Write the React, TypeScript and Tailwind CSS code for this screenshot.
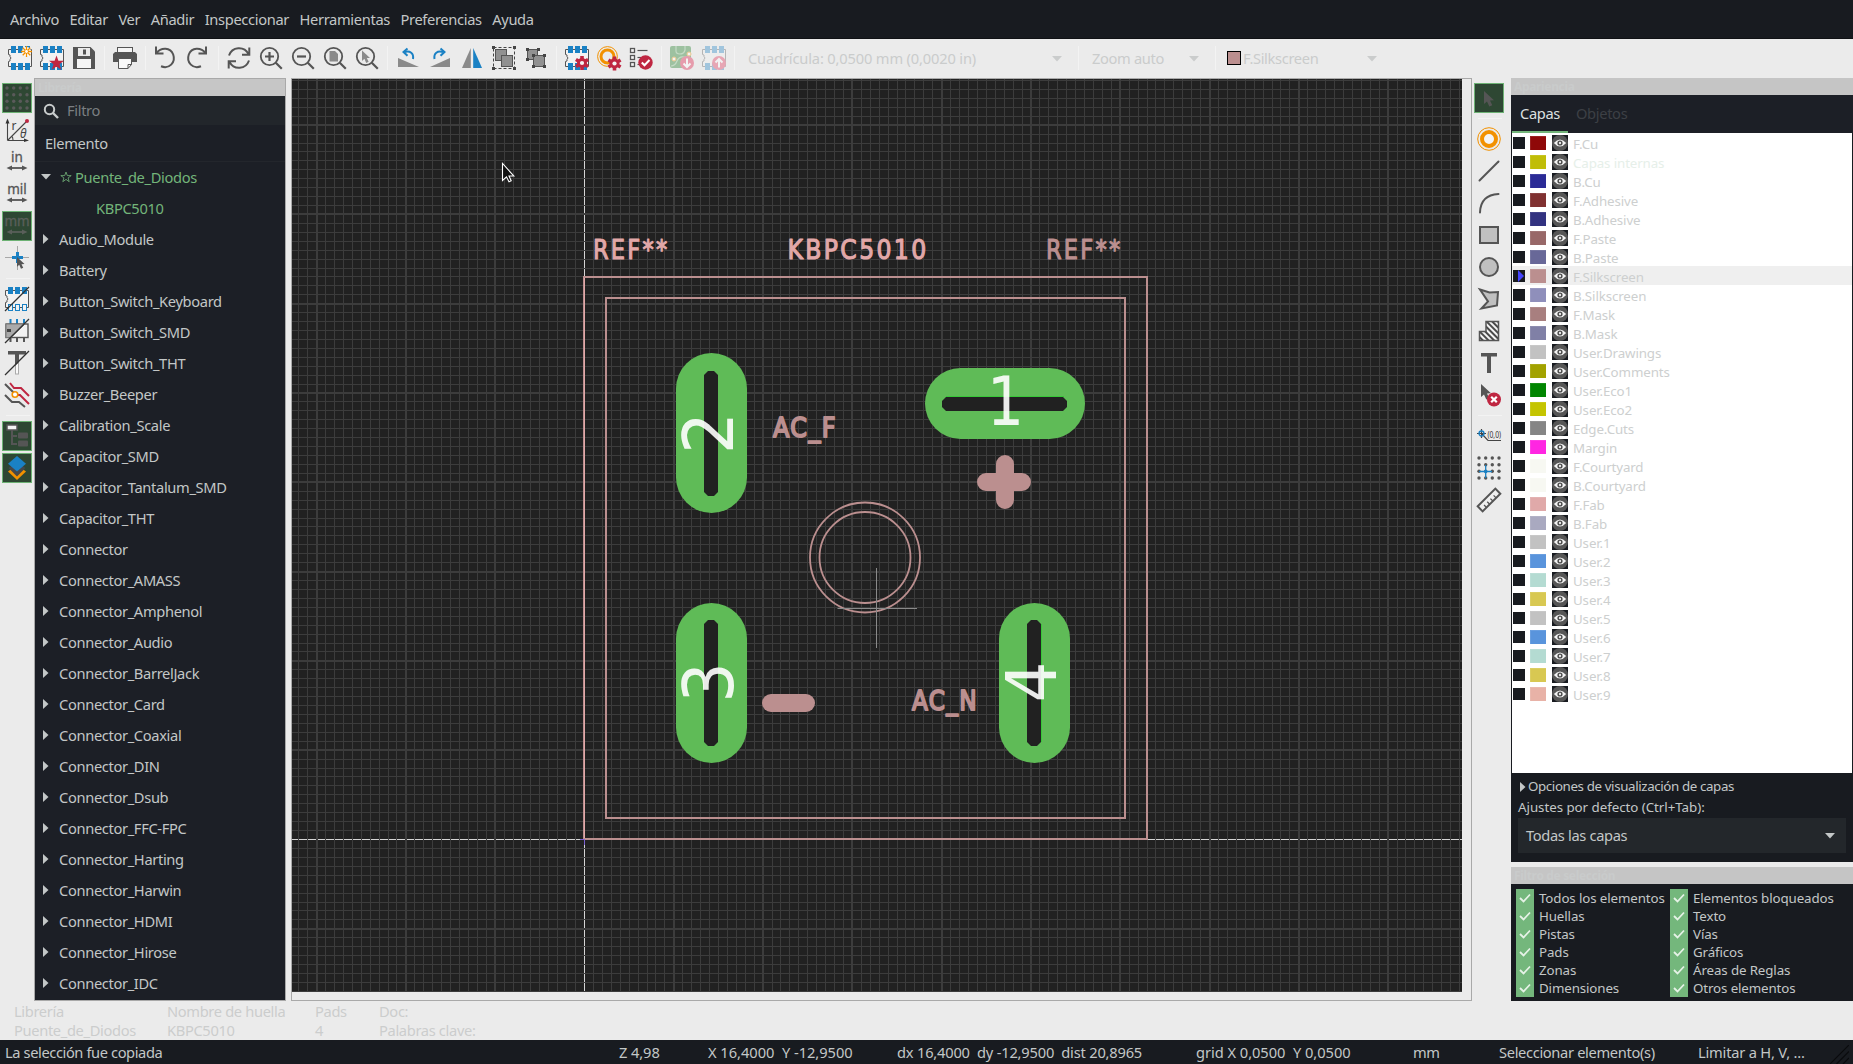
import React from "react";

const DARK = "#555555";
const BLUE = "#1a81c4";
const RED = "#bf2641";
const ORANGE = "#f29100";

function Ic({ children, className = "" }: { children: React.ReactNode; className?: string }) {
  return (
    <svg width="24" height="24" viewBox="0 0 24 24" fill="none" className={`block shrink-0 overflow-visible ${className}`}>
      {children}
    </svg>
  );
}

/* ---------- shared icon parts ---------- */
function Footprint({ hollow = false }: { hollow?: boolean }) {
  return (
    <>
      <path d="M.5 3.5H23.5V20.5H.5V15.5L2 15V13.5L3 12L2 10.5V9L.5 8.500Z" fill="#f2f2f2" stroke="#545454" />
      {[3, 10, 17].map((x) => (
        <g key={x}>
          <rect x={x} y="0" width="5" height="7" fill={BLUE} />
          {hollow ? (
            <rect x={x + 0.5} y="17.500" width="4" height="6" fill="#f2f2f2" stroke={BLUE} />
          ) : (
            <rect x={x} y="17" width="5" height="7" fill={BLUE} />
          )}
        </g>
      ))}
    </>
  );
}

function Gear({ cx, cy }: { cx: number; cy: number }) {
  return (
    <g transform={`translate(${cx} ${cy})`}>
      {[0, 60, 120].map((a) => (
        <rect key={a} x="-1.800" y="-7" width="3.600" height="14" fill={RED} transform={`rotate(${a})`} />
      ))}
      <circle r="5" fill={RED} />
      <circle r="2.100" fill="#f4f4f4" />
    </g>
  );
}

function Magnifier({ children }: { children?: React.ReactNode }) {
  return (
    <Ic>
      <circle cx="10.500" cy="10.500" r="8.700" stroke={DARK} strokeWidth="1.800" />
      <path d="M16.800 16.800L22.800 22.800" stroke={DARK} strokeWidth="2.200" />
      {children}
    </Ic>
  );
}

const Arrow = ({ x = 0, y = 0, fill = DARK }: { x?: number; y?: number; fill?: string }) => (
  <path
    transform={`translate(${x} ${y})`}
    d="M0 0V13L3 10.400L5.300 15.500L8.300 14.200L6 9.500L10 9.300Z"
    fill={fill}
  />
);

/* ---------- top toolbar ---------- */
const NewFp = () => (
  <Ic>
    <Footprint />
    <circle cx="18.500" cy="5.500" r="4.500" fill="#fff" />
    <path d="M18.500 0V11M13 5.500H24M14.700 1.700L22.300 9.300M22.300 1.700L14.700 9.300" stroke={ORANGE} strokeWidth="1.300" />
    <circle cx="18.500" cy="5.500" r="1.400" fill="#fff" />
  </Ic>
);
const StarFp = () => (
  <Ic>
    <Footprint />
    <path d="M16.500 9.500L18.400 14.800H24L19.500 18.200L21.200 23.800L16.500 20.400L11.800 23.800L13.500 18.200L9 14.800H14.600Z" fill={RED} />
  </Ic>
);
const Save = () => (
  <Ic>
    <path d="M1 1H18.500L23 5.500V23H1Z" fill={DARK} />
    <rect x="6" y="2" width="12" height="8" fill="#ebebeb" />
    <rect x="11" y="3.500" width="3" height="5" fill={DARK} />
    <rect x="5" y="13" width="14" height="9" fill="#f5f5f5" />
  </Ic>
);
const Print = () => (
  <Ic>
    <rect x="4.500" y="1.500" width="15" height="6" fill="#f5f5f5" stroke={DARK} />
    <path d="M2 6H22L24 8V16H0V8Z" fill={DARK} />
    <path d="M5.500 12.500H18.500V18.500L15 22.500H5.500Z" fill="#f8f8f8" stroke={DARK} />
    <path d="M18.500 18.500H15V22.500" stroke={DARK} />
  </Ic>
);
const Undo = () => (
  <Ic>
    <path d="M3 .5V7.500H10.500M3.300 7.300C8 1 17.500 1.200 20.200 8.500C23 16.500 16 23.500 8 20.300" stroke={DARK} strokeWidth="2" />
  </Ic>
);
const Redo = () => (
  <Ic>
    <path d="M21 .5V7.500H13.500M20.700 7.300C16 1 6.500 1.200 3.800 8.500C1 16.500 8 23.500 16 20.300" stroke={DARK} strokeWidth="2" />
  </Ic>
);
const Refresh = () => (
  <Ic>
    <path d="M2 9.500C5 .5 17 -.5 21.500 8M22.300 1.500V8.700H15M22 14.500C19 23.500 7 24.500 2.500 16M1.700 22.500V15.300H9" stroke={DARK} strokeWidth="2" />
  </Ic>
);
const RotL = () => (
  <Ic>
    <path d="M2 12V21H23Z" fill="#8a8a8a" />
    <path d="M17 13C18 7 14 4.500 8.500 6" stroke={BLUE} strokeWidth="2" />
    <path d="M11.500 2.500L7.500 6L11.500 9.800" stroke={BLUE} strokeWidth="2" />
  </Ic>
);
const RotR = () => (
  <Ic>
    <path d="M22 12V21H2Z" fill="#8a8a8a" />
    <path d="M6.500 13C5.500 7 9.500 4.500 15 6" stroke={BLUE} strokeWidth="2" />
    <path d="M12.500 2.500L16.500 6L12.500 9.800" stroke={BLUE} strokeWidth="2" />
  </Ic>
);
const Mirror = () => (
  <Ic>
    <path d="M10.800 2V22H2Z" fill="#8a8a8a" />
    <path d="M13.200 2V22H22Z" fill={BLUE} />
  </Ic>
);
const Group = () => (
  <Ic>
    <rect x="3.500" y="3.500" width="11" height="11" fill="#919191" stroke={DARK} />
    <rect x="9.500" y="9.500" width="11" height="11" fill="#919191" stroke={DARK} />
    <rect x="1.500" y="1.500" width="21" height="21" stroke="#444" strokeDasharray="3 2" />
    {[0, 21].map((x) => [0, 21].map((y) => <rect key={`${x}${y}`} x={x} y={y} width="3" height="3" fill="#444" />))}
  </Ic>
);
const Ungroup = () => (
  <Ic>
    <rect x="3.500" y="3.500" width="10" height="10" fill="#919191" stroke={DARK} />
    <rect x="9.500" y="9.500" width="11" height="11" fill="#919191" stroke={DARK} />
    {[[2, 2], [13, 2], [2, 12], [8, 8], [19, 8], [8, 19], [19, 19]].map(([x, y]) => (
      <rect key={`${x}-${y}`} x={x} y={y} width="3" height="3" fill="#444" />
    ))}
  </Ic>
);
const FpProps = () => (
  <Ic>
    <Footprint />
    <Gear cx={17} cy={17} />
  </Ic>
);
const PadProps = () => (
  <Ic>
    <circle cx="10.500" cy="10.500" r="9.900" stroke={ORANGE} />
    <circle cx="10.500" cy="10.500" r="6.500" stroke={ORANGE} strokeWidth="3" />
    <Gear cx={17.500} cy={17.500} />
  </Ic>
);
const Check = () => (
  <Ic>
    {[2.500, 9.500, 16.500].map((y) => (
      <g key={y} stroke={DARK}>
        <rect x="1.500" y={y} width="4" height="4" fill="#f4f4f4" strokeWidth="1.300" />
        <path d={`M8.500 ${y + 2}H18.500`} strokeWidth="1.200" />
      </g>
    ))}
    <circle cx="16.500" cy="16.500" r="7.200" fill={RED} />
    <path d="M12.800 16.500L15.500 19.300L20.500 14" stroke="#fff" strokeWidth="2" />
  </Ic>
);
const Board = () => (
  <Ic className="opacity-40">
    <rect width="21" height="22" rx="2" fill="#2b8533" />
    <path d="M6 0V5Q6 8 10 8T15 4V0M1 20Q5 20 7 15T14 11H20" stroke="#8fc28f" strokeWidth="1.200" />
    <circle cx="4" cy="13" r="2" fill="#fff" stroke={ORANGE} />
    <circle cx="19" cy="8" r="2" fill="#fff" stroke={ORANGE} />
    <circle cx="17" cy="17" r="7" fill="#e02850" />
    <path d="M17 12.500V20.500M13.500 17.500L17 21L20.500 17.500" stroke="#fff" strokeWidth="2" />
  </Ic>
);
const FpUp = () => (
  <Ic className="opacity-35">
    <Footprint />
    <circle cx="17" cy="17" r="7" fill="#e02850" />
    <path d="M17 21.500V13.500M13.500 16.500L17 13L20.500 16.500" stroke="#fff" strokeWidth="2" />
  </Ic>
);
const ZoomIn = () => (
  <Magnifier>
    <path d="M10.500 6V15M6 10.500H15" stroke={DARK} strokeWidth="2.200" />
  </Magnifier>
);
const ZoomOut = () => (
  <Magnifier>
    <path d="M6 10.500H15" stroke={DARK} strokeWidth="2.200" />
  </Magnifier>
);
const ZoomFit = () => (
  <Magnifier>
    <path d="M6.500 5H12L15 8V15.500H6.500Z" fill="#8a8a8a" />
  </Magnifier>
);
const ZoomSel = () => (
  <Magnifier>
    <g transform="translate(7 4.500) scale(.8)"><Arrow fill="#8a8a8a" /></g>
  </Magnifier>
);

const Sep = ({ className }: { className: string }) => <div className={`h-6 w-px shrink-0 bg-[#f3f3f3] ${className}`} />;
const Caret = ({ className = "" }: { className?: string }) => (
  <svg width="10" height="6" viewBox="0 0 10 6" className={`block shrink-0 ${className}`}>
    <path d="M0 0H10L5 5.500Z" fill="currentColor" />
  </svg>
);

/* ---------- left toolbar ---------- */
const GridDots = () => (
  <Ic>
    {[2, 8.700, 15.300, 22].map((x) => [2, 8.700, 15.300, 22].map((y) => <circle key={`${x}${y}`} cx={x} cy={y} r="1.700" fill="#5a5a5a" />))}
  </Ic>
);
const Polar = () => (
  <Ic>
    <path d="M2.500 22.500V2M2.500 22.500H22M2.500 22.500L21 4M8 22Q8 19 6.500 18" stroke="#454545" strokeWidth="1.100" />
    <path d="M.5 5.500L2.500 .5L4.500 5.500ZM19 20.500L24 22.500L19 24Z" fill="#333" />
    <circle cx="22" cy="3" r="2" fill={RED} />
    <text x="6.500" y="11.500" fontSize="12" letterSpacing="0" fontFamily="Noto Sans" fill="#444">r</text>
    <text x="15" y="20" fontSize="12" letterSpacing="0" fontStyle="italic" fontFamily="Noto Sans" fill="#444">θ</text>
  </Ic>
);
const Unit = ({ t, fill = DARK }: { t: string; fill?: string }) => (
  <Ic>
    <text x="12" y="12" textAnchor="middle" fontSize="13.500" letterSpacing="0" fontFamily="Noto Sans" fill={fill} stroke={fill} strokeWidth=".3">{t}</text>
    <path d="M4 18H20" stroke={fill} strokeWidth="1.800" />
    <path d="M1.500 18L7 15.500V20.500ZM22.500 18L17 15.500V20.500Z" fill={fill} />
  </Ic>
);
const CursorFull = () => (
  <Ic>
    <path d="M0 11.500H24M12.500 0V24" stroke="#a8a8a8" />
    <path d="M12.500 6V17M7 11.500H18" stroke={BLUE} strokeWidth="3" />
    <g transform="translate(12 11) scale(.75)"><Arrow /></g>
  </Ic>
);
const FpOutline = () => (
  <Ic>
    <Footprint hollow />
    <path d="M0 24L24 0" stroke="#333" strokeWidth="1.200" />
  </Ic>
);
const FpGraphic = () => (
  <Ic>
    <path d="M5.500 0V6M12 0V6M19 0V6" stroke={BLUE} strokeWidth="2" />
    <path d="M5.500 18V23M12 18V23M19 18V23" stroke={DARK} strokeWidth="2" />
    <rect x="1" y="5" width="22" height="13.500" fill="#f2f2f2" stroke={DARK} strokeWidth="1.400" />
    <path d="M1 5H20L6 18.500H1Z" fill="#aaa" stroke="#7a7a7a" />
    <rect x="2" y="10" width="4" height="3" fill="#444" />
    <path d="M0 24L24 0" stroke="#333" strokeWidth="1.200" />
  </Ic>
);
const TextOutline = () => (
  <Ic>
    <rect x="10.500" y="12" width="3" height="11" fill="#fafafa" stroke="#aaa" />
    <path d="M3 0H21V3.500H14V11L10 15V3.500H3Z" fill={DARK} />
    <path d="M0 24L24 0" stroke="#333" strokeWidth="1.200" />
  </Ic>
);
const Tracks = () => (
  <Ic>
    <path d="M0 1L9 10M0 12L7 19H14L20 24" stroke={DARK} strokeWidth="2" />
    <path d="M5 0L9 5H16L24 13M11 12H15L24 21" stroke={RED} strokeWidth="2" />
    <circle cx="10" cy="11.500" r="2.800" fill="#fff" stroke={ORANGE} strokeWidth="1.600" />
  </Ic>
);
const Tree = () => (
  <Ic>
    <path d="M7 6V20H12M7 12H12" stroke={DARK} strokeWidth="2" />
    <rect x="2" y="1" width="10" height="5" fill="#f4f4f4" stroke={DARK} strokeWidth="1.500" />
    <rect x="13" y="8.500" width="10" height="6" rx="1" fill={DARK} />
    <rect x="13" y="16.500" width="10" height="6" rx="1" fill={DARK} />
  </Ic>
);
const Layers = () => (
  <Ic>
    <path d="M12 9L21 15.500L12 24L3 15.500Z" fill={ORANGE} />
    <path d="M12 6L20.500 12L12 20.500L3.500 12Z" fill="#45484b" />
    <path d="M12 0L21 7.800L12 15.500L3 7.800Z" fill={BLUE} />
  </Ic>
);

function Tool({ on = false, children }: { on?: boolean; children: React.ReactNode }) {
  return (
    <div
      className={
        on
          ? "flex h-[30px] w-[30px] shrink-0 items-center justify-center border border-[#6db274] bg-[#2e4733]"
          : "flex h-[30px] w-[30px] shrink-0 items-center justify-center"
      }
    >
      {children}
    </div>
  );
}

/* ---------- right toolbar ---------- */
const PadIc = () => (
  <Ic>
    <circle cx="12" cy="12" r="11.300" stroke={ORANGE} />
    <circle cx="12" cy="12" r="7" fill="#f4f4f4" stroke={ORANGE} strokeWidth="4" />
  </Ic>
);
const LineIc = () => <Ic><path d="M2.500 21.500L21.500 2.500" stroke={DARK} strokeWidth="2" strokeLinecap="round" /></Ic>;
const ArcIc = () => <Ic><path d="M3 21.500Q3.500 4 21.500 3" stroke={DARK} strokeWidth="2" strokeLinecap="round" /></Ic>;
const RectIc = () => <Ic><rect x="3" y="4" width="18" height="16" fill="#c0c0c0" stroke={DARK} strokeWidth="2" /></Ic>;
const CircIc = () => <Ic><circle cx="12" cy="12" r="9" fill="#c0c0c0" stroke={DARK} strokeWidth="2" /></Ic>;
const PolyIc = () => <Ic><path d="M3 2.500L12.500 5.500L21 5L20 18.500L4.500 21.500L11 14.500Z" fill="#c0c0c0" stroke={DARK} strokeWidth="2" /></Ic>;
const ZoneIc = () => (
  <Ic>
    <defs>
      <pattern id="hatch" width="4" height="4" patternUnits="userSpaceOnUse" patternTransform="rotate(-45)">
        <rect width="4" height="4" fill="#f4f4f4" />
        <rect width="2" height="4" fill="#4a4a4a" />
      </pattern>
    </defs>
    <path d="M2.500 12.500H9V2.500H21.500V21.500H2.500Z" fill="url(#hatch)" stroke={DARK} strokeWidth="1.500" />
  </Ic>
);
const TextIc = () => <Ic><path d="M4 2H20V5.500H14V22H10V5.500H4Z" fill={DARK} /></Ic>;
const DelIc = () => (
  <Ic>
    <g transform="translate(4 1)"><Arrow /></g>
    <circle cx="17" cy="16.500" r="7" fill={RED} />
    <path d="M14.200 13.700L19.800 19.300M19.800 13.700L14.200 19.300" stroke="#fff" strokeWidth="2.200" />
  </Ic>
);
const OriginIc = () => (
  <Ic>
    <path d="M4.500 5V14M0 9.500H9M5 10L11 16.500H24" stroke="#444" strokeWidth="1.200" />
    <circle cx="4.500" cy="9.500" r="2.500" stroke={BLUE} strokeWidth="1.300" />
    <text x="10.500" y="14" fontSize="8.500" letterSpacing="0" textLength="13.500" lengthAdjust="spacingAndGlyphs" fontFamily="Noto Sans" fill="#333">(0,0)</text>
  </Ic>
);
const GridOrigin = () => (
  <Ic>
    {[2, 8.700, 15.300, 22].map((x) => [2, 8.700, 15.300, 22].map((y) => <circle key={`${x}${y}`} cx={x} cy={y} r="1.700" fill={DARK} />))}
    <path d="M8.700 9V22M2 15.500H15" stroke={BLUE} strokeWidth="1.300" />
    <circle cx="8.700" cy="15.500" r="1.700" fill={BLUE} />
  </Ic>
);
const Ruler = () => (
  <Ic>
    <g transform="rotate(-45 12 12)">
      <rect x="-.5" y="8.500" width="25" height="7" fill="#f0f0f0" stroke={DARK} strokeWidth="2" />
      <path d="M5 12V15.500M9.500 12V15.500M14 12V15.500M18.500 12V15.500" stroke={DARK} strokeWidth="1.300" />
    </g>
  </Ic>
);

/* ---------- drawing canvas ---------- */
const VX = 292, VY = 79, VW = 1170, VH = 913;
const OX = 584.500, OY = 839.500, STEP = 8.929;

const SILK = "#bb8f8f";
const FAB = "#e2a8a8";
const PAD = "#5fbb57";

function Hole({ x, y, w, h }: { x: number; y: number; w: number; h: number }) {
  const c = 4;
  return (
    <path
      d={`M${x + c} ${y}H${x + w - c}L${x + w} ${y + c}V${y + h - c}L${x + w - c} ${y + h}H${x + c}L${x} ${y + h - c}V${y + c}Z`}
      fill="#212121"
    />
  );
}

/* Board text: narrow, widely spaced glyphs; `w` is the full advance, `h` the cap height. */
function Cap({ x, y, w, h, fill, sw = 1.2, ls = 0.1, children }: { x: number; y: number; w: number; h: number; fill: string; sw?: number; ls?: number; children: string }) {
  const size = h / 0.729;
  return (
    <text x={x} y={y} fontSize={size} letterSpacing={size * ls} textLength={w} lengthAdjust="spacingAndGlyphs" fontFamily="DejaVu Sans" fill={fill} stroke={fill} strokeWidth={sw} strokeLinejoin="round">
      {children}
    </text>
  );
}

function Canvas() {
  const v: React.ReactNode[] = [];
  const h: React.ReactNode[] = [];
  for (let k = -32; k <= 98; k++) {
    if (k === 0) continue;
    const x = OX + k * STEP;
    const major = k % 10 === 0;
    v.push(<rect key={k} x={major ? Math.round(x) - 1 : Math.floor(x)} y={VY} width={major ? 2 : 1} height={VH} fill="#3c3c3c" />);
  }
  for (let k = -85; k <= 17; k++) {
    if (k === 0) continue;
    const y = OY + k * STEP;
    const major = k % 10 === 0;
    h.push(<rect key={k} x={VX} y={major ? Math.round(y) - 1 : Math.floor(y)} width={VW} height={major ? 2 : 1} fill="#3c3c3c" />);
  }
  return (
    <svg width={VW} height={VH} viewBox={`${VX} ${VY} ${VW} ${VH}`} className="block shrink-0 bg-[#212121]">
      <g shapeRendering="crispEdges">
        <rect x="584" y={VY} width="1" height={VH} fill="#d4d4d4" />
        <rect x={VX} y="839" width={VW} height="1" fill="#d4d4d4" />
        {v}
        {h}
      </g>
      <g stroke={SILK} strokeWidth="2" fill="none">
        <rect x="584" y="277" width="563" height="562" />
        <rect x="606" y="298" width="519" height="520" />
        <circle cx="865" cy="557.500" r="55" strokeWidth="1.800" />
        <circle cx="865" cy="557.500" r="45.500" strokeWidth="1.800" />
      </g>
      <path d="M584.500 278V838" stroke={FAB} />
      <path d="M580 839.500H584.500V845" stroke="#7a5fd0" fill="none" />

      <g fill={PAD}>
        <rect x="676" y="353" width="71" height="160" rx="35.500" />
        <rect x="676" y="603" width="71" height="160" rx="35.500" />
        <rect x="999" y="603" width="71" height="160" rx="35.500" />
        <rect x="925" y="368" width="160" height="71" rx="35.500" />
      </g>
      <rect x="946" y="396" width="118" height="1" fill="#37c837" />
      <rect x="1041" y="624" width="1" height="118" fill="#37c837" />
      <Hole x={704} y={371} w={14} h={125} />
      <Hole x={704} y={620} w={14} h={126} />
      <Hole x={1027} y={620} w={14} h={126} />
      <Hole x={942} y={397} w={125} h={14} />

      <g fill={SILK}>
        <path d="M996 464A9 9 0 0 1 1014 464V473H1022A9 9 0 0 1 1022 491H1014V500A9 9 0 0 1 996 500V491H986A9 9 0 0 1 986 473H996Z" />
        <rect x="762" y="694" width="53" height="18" rx="9" />
      </g>

      <Cap x={593} y={258.500} w={76.500} h={20} fill={FAB}>REF**</Cap>
      <Cap x={787.500} y={258.500} w={141} h={20} fill={FAB}>KBPC5010</Cap>
      <Cap x={1046} y={258.500} w={76.500} h={20} fill={SILK}>REF**</Cap>
      <Cap x={773} y={437} w={64} h={20} fill={SILK} sw={2} ls={0.06}>AC_F</Cap>
      <Cap x={912} y={710} w={66} h={20} fill={SILK} sw={2} ls={0.06}>AC_N</Cap>

      <g fill="#ffffff" fillOpacity=".9" fontFamily="DejaVu Sans" letterSpacing="0">
        <text transform="translate(1005.500 425)" textAnchor="middle" fontSize="68" textLength="37" lengthAdjust="spacingAndGlyphs">1</text>
        <text transform="translate(733 433) rotate(-90)" textAnchor="middle" fontSize="70" textLength="42" lengthAdjust="spacingAndGlyphs">2</text>
        <text transform="translate(733 682.500) rotate(-90)" textAnchor="middle" fontSize="69" textLength="40" lengthAdjust="spacingAndGlyphs">3</text>
        <text transform="translate(1056 682) rotate(-90)" textAnchor="middle" fontSize="70" textLength="41" lengthAdjust="spacingAndGlyphs">4</text>
      </g>

      <path d="M876.500 568V648M837.500 608.500H917" stroke="#8a8a8a" fill="none" />
      <path d="M502.500 163.500V180.500L506.500 176.800L509 181.700L511.200 180.700L509 176H513.800Z" fill="#111" stroke="#fff" strokeWidth="1.100" />
    </svg>
  );
}

/* ---------- data ---------- */
const MENU = ["Archivo", "Editar", "Ver", "Añadir", "Inspeccionar", "Herramientas", "Preferencias", "Ayuda"];

const LIBS = [
  "Audio_Module", "Battery", "Button_Switch_Keyboard", "Button_Switch_SMD", "Button_Switch_THT", "Buzzer_Beeper",
  "Calibration_Scale", "Capacitor_SMD", "Capacitor_Tantalum_SMD", "Capacitor_THT", "Connector", "Connector_AMASS",
  "Connector_Amphenol", "Connector_Audio", "Connector_BarrelJack", "Connector_Card", "Connector_Coaxial", "Connector_DIN",
  "Connector_Dsub", "Connector_FFC-FPC", "Connector_Harting", "Connector_Harwin", "Connector_HDMI", "Connector_Hirose",
  "Connector_IDC",
];

const LAYERS: [string, string][] = [
  ["F.Cu", "#8f0808"], ["Capas internas", "#c0bd08"], ["B.Cu", "#2b2b96"], ["F.Adhesive", "#803131"], ["B.Adhesive", "#323280"],
  ["F.Paste", "#986868"], ["B.Paste", "#686898"], ["F.Silkscreen", "#bb8f8f"], ["B.Silkscreen", "#8f8fbb"], ["F.Mask", "#a87f7f"],
  ["B.Mask", "#8080a6"], ["User.Drawings", "#c2c2c2"], ["User.Comments", "#a2a200"], ["User.Eco1", "#008500"],
  ["User.Eco2", "#c4c400"], ["Edge.Cuts", "#858585"], ["Margin", "#ff26e2"], ["F.Courtyard", "#f7f8f2"],
  ["B.Courtyard", "#f7f8f2"], ["F.Fab", "#e0a9a9"], ["B.Fab", "#a9a9c0"], ["User.1", "#c2c2c2"], ["User.2", "#5994dc"],
  ["User.3", "#b4dbd2"], ["User.4", "#d8c852"], ["User.5", "#c2c2c2"], ["User.6", "#5994dc"], ["User.7", "#b4dbd2"],
  ["User.8", "#d8c852"], ["User.9", "#e8b2a7"],
];

const FILTERS_L = ["Todos los elementos", "Huellas", "Pistas", "Pads", "Zonas", "Dimensiones"];
const FILTERS_R = ["Elementos bloqueados", "Texto", "Vías", "Gráficos", "Áreas de Reglas", "Otros elementos"];

function LayerRow({ name, color }: { name: string; color: string }) {
  const active = name === "F.Silkscreen";
  return (
    <div className={`flex h-[19px] shrink-0 items-center pl-px ${active ? "bg-[#efefef]" : ""}`}>
      <div className="flex h-3 w-3 items-center justify-end bg-[#181b20] pr-px">
        {active && (
          <svg width="6" height="12" viewBox="0 0 6 12"><path d="M0 0L6 6L0 12Z" fill="#4444ff" /></svg>
        )}
      </div>
      <div className="ml-[5px] h-3.5 w-4 border-l border-t border-white/10" style={{ backgroundColor: color }} />
      <svg width="16" height="16" viewBox="0 0 16 16" className="ml-1.5 block bg-[#181b20]">
        <circle cx="8" cy="8" r="8" fill="#565656" />
        <path d="M1.800 8Q8 1 14.200 8Q8 15 1.800 8Z" fill="#f2f2f2" />
        <circle cx="8" cy="8" r="2.600" fill="#4a4a4a" />
        <circle cx="8" cy="8" r="1.200" fill="#e8e8e8" />
      </svg>
      <span className={`ml-[5px] pt-[3.5px] text-[13.33px] leading-none tracking-[-0.12px] ${name === "Capas internas" ? "text-[#e6efe9]" : "text-[#cdcfcf]"}`}>{name}</span>
    </div>
  );
}

function FilterCol({ items }: { items: string[] }) {
  return (
    <div className="flex w-[154px] shrink-0 flex-col">
      {items.map((t) => (
        <div key={t} className="flex h-[18px] items-center whitespace-nowrap">
          <div className="flex h-[18px] w-[18px] shrink-0 items-center justify-center bg-[#74b77c]">
            <svg width="12" height="10" viewBox="0 0 12 10"><path d="M1 5L4.500 8.500L11 1.500" fill="none" stroke="#e6f2e7" strokeWidth="1.800" /></svg>
          </div>
          <span className="ml-[5px] text-[13.33px] leading-[18px] tracking-[-0.12px]">{t}</span>
        </div>
      ))}
    </div>
  );
}

const Status = ({ className, children }: { className: string; children: React.ReactNode }) => (
  <span className={`shrink-0 overflow-visible whitespace-pre ${className}`}>{children}</span>
);

export default function App() {
  return (
    <div className="flex h-[1064px] w-[1853px] flex-col overflow-hidden bg-[#ebebeb] font-['Noto_Sans',sans-serif] text-[14.67px] tracking-[-0.34px] text-[#c3c7c7]">
      {/* menu bar */}
      <nav className="flex h-[39px] shrink-0 items-center gap-[10.5px] border-b border-[#101215] bg-[#181b20] pl-[10px]">
        {MENU.map((m) => <span key={m}>{m}</span>)}
      </nav>

      {/* toolbar */}
      <div className="flex h-[39px] shrink-0 items-center pl-2 pb-0.5">
        <div className="flex gap-2"><NewFp /><StarFp /><Save /></div>
        <Sep className="ml-2" />
        <div className="ml-2 flex"><Print /></div>
        <Sep className="ml-2" />
        <div className="ml-[7px] flex gap-2"><Undo /><Redo /></div>
        <Sep className="ml-[9px]" />
        <div className="ml-2 flex gap-2"><Refresh /><ZoomIn /><ZoomOut /><ZoomFit /><ZoomSel /></div>
        <Sep className="ml-2" />
        <div className="ml-2 flex gap-2"><RotL /><RotR /><Mirror /><Group /><Ungroup /></div>
        <Sep className="ml-2" />
        <div className="ml-2 flex gap-2"><FpProps /><PadProps /><Check /></div>
        <Sep className="ml-2" />
        <div className="ml-2 flex gap-2"><Board /><FpUp /></div>
        <Sep className="ml-2" />
        <div className="ml-[13px] flex w-[314px] items-center justify-between text-[#cacccc]">
          <span className="tracking-[-0.16px]">Cuadrícula: 0,0500 mm (0,0020 in)</span><Caret className="mt-0.5" />
        </div>
        <Sep className="ml-4" />
        <div className="ml-[13px] flex w-[107px] items-center justify-between text-[#cacccc]">
          <span>Zoom auto</span><Caret className="mt-0.5" />
        </div>
        <Sep className="ml-4" />
        <div className="ml-[11px] flex w-[150px] items-center text-[#cacccc]">
          <div className="h-3.5 w-3.5 border border-black bg-[#bb8f8f]" />
          <span className="ml-0.5">F.Silkscreen</span><Caret className="ml-auto mt-0.5" />
        </div>
      </div>

      {/* workspace */}
      <div className="flex h-[923px] shrink-0">
        <aside className="flex w-[34px] shrink-0 flex-col gap-0.5 pl-0.5 pt-[5px]">
          <Tool on><GridDots /></Tool>
          <Tool><Polar /></Tool>
          <Tool><Unit t="in" /></Tool>
          <Tool><Unit t="mil" /></Tool>
          <Tool on><Unit t="mm" fill="#5a5f5a" /></Tool>
          <Tool><CursorFull /></Tool>
          <div className="mx-1 my-[3px] h-px shrink-0 bg-[#f3f3f3]" />
          <Tool><FpOutline /></Tool>
          <Tool><FpGraphic /></Tool>
          <Tool><TextOutline /></Tool>
          <Tool><Tracks /></Tool>
          <div className="mx-1 my-[3px] h-px shrink-0 bg-[#f3f3f3]" />
          <Tool on><Tree /></Tool>
          <Tool on><Layers /></Tool>
        </aside>

        <section className="flex w-[252px] shrink-0 flex-col border border-[#a9a9a9] bg-[#1c1f26]">
          <div className="h-[17px] shrink-0 bg-[#c6c6c6] pl-[3px] text-[12px] font-bold leading-[17px] text-[#c9cbcb]">Librería</div>
          <div className="flex h-[29px] shrink-0 items-center bg-[#22262b] pl-2 text-[#7b7f82]">
            <svg width="16" height="16" viewBox="0 0 16 16" fill="none" stroke="#c8cccc" strokeWidth="2">
              <circle cx="6.500" cy="6.500" r="4.700" /><path d="M10 10L15 15" strokeWidth="2.400" />
            </svg>
            <span className="mb-0.5 ml-2">Filtro</span>
          </div>
          <div className="flex h-[37px] shrink-0 items-center border-b border-[#23262c] pl-[10px]">Elemento</div>
          <div className="flex h-[31px] shrink-0 items-center pb-px pl-1.5 text-[#73b57a]">
            <Caret className="text-[#c3c7c7]" />
            <svg width="12" height="12" viewBox="0 0 12 12" className="ml-[9px]">
              <path d="M6 1L7.300 4.600H11.200L8.100 6.900L9.200 10.700L6 8.400L2.800 10.700L3.900 6.900L.8 4.600H4.700Z" fill="none" stroke="#73b57a" strokeWidth=".8" />
            </svg>
            <span className="mb-px ml-[3px]">Puente_de_Diodos</span>
          </div>
          <div className="flex h-[31px] shrink-0 items-center pb-0.5 pl-[61px] text-[#73b57a]">KBPC5010</div>
          {LIBS.map((l) => (
            <div key={l} className="flex h-[31px] shrink-0 items-center pl-2">
              <svg width="6" height="10" viewBox="0 0 6 10" className="mb-px"><path d="M0 0L5.500 5L0 10Z" fill="#c3c7c7" /></svg>
              <span className="mb-0.5 ml-[10px]">{l}</span>
            </div>
          ))}
        </section>

        <main className="ml-[5px] flex w-[1181px] shrink-0 border border-[#a9a9a9]">
          <Canvas />
        </main>

        <aside className="flex w-[39px] shrink-0 flex-col gap-0.5 pl-0.5 pt-[5px]">
          <Tool on><Ic><g transform="translate(7 5)"><Arrow /></g></Ic></Tool>
          <div className="mx-1 my-[3px] h-px w-6 shrink-0 bg-[#f3f3f3]" />
          <Tool><PadIc /></Tool>
          <Tool><LineIc /></Tool>
          <Tool><ArcIc /></Tool>
          <Tool><RectIc /></Tool>
          <Tool><CircIc /></Tool>
          <Tool><PolyIc /></Tool>
          <Tool><ZoneIc /></Tool>
          <Tool><TextIc /></Tool>
          <Tool><DelIc /></Tool>
          <div className="mx-1 my-[3px] h-px w-6 shrink-0 bg-[#f3f3f3]" />
          <Tool><OriginIc /></Tool>
          <Tool><GridOrigin /></Tool>
          <Tool><Ruler /></Tool>
        </aside>

        <div className="flex w-[342px] shrink-0 flex-col">
          <div className="h-[17px] shrink-0 bg-[#c5c5c5] pl-[3px] text-[12px] font-bold leading-[17px] text-[#c9cbcb]">Apariencia</div>
          <div className="flex h-[38px] shrink-0 bg-[#1c1f26] pl-px">
            <div className="flex h-[38px] w-14 items-center justify-center border-b-2 border-[#73b57a] text-[#dde0e0]">Capas</div>
            <div className="flex h-[38px] items-center pb-0.5 pl-2 text-[#3c4045]">Objetos</div>
          </div>
          <div className="flex h-[640px] shrink-0 flex-col border-x border-[#181b20] bg-white">
            {LAYERS.map(([n, c]) => <LayerRow key={n} name={n} color={c} />)}
          </div>
          <div className="flex h-[89px] shrink-0 flex-col bg-[#181b20] pl-[7px] text-[13.33px] tracking-[-0.12px]">
            <div className="mt-1 flex h-5 items-center pl-0.5">
              <svg width="6" height="10" viewBox="0 0 6 10"><path d="M0 0L5.500 5L0 10Z" fill="#c3c7c7" /></svg>
              <span className="ml-[2px] tracking-[-0.38px]">Opciones de visualización de capas</span>
            </div>
            <div className="flex h-[21px] items-center tracking-[-0.04px]">Ajustes por defecto (Ctrl+Tab):</div>
            <div className="flex h-[35px] w-[328px] items-center justify-between bg-[#23272b] px-2 pr-[11px] text-[14.67px] tracking-[-0.34px]">
              <span className="mb-0.5">Todas las capas</span><Caret />
            </div>
          </div>
          <div className="mt-[5px] h-[17px] shrink-0 bg-[#c5c5c5] pl-[3px] text-[12px] font-bold leading-[17px] text-[#c9cbcb]">Filtro de selección</div>
          <div className="flex h-[117px] shrink-0 bg-[#181b20] pl-[5px] pt-[5px]">
            <FilterCol items={FILTERS_L} />
            <FilterCol items={FILTERS_R} />
          </div>
        </div>
      </div>

      {/* message panel */}
      <div className="flex h-[39px] shrink-0 pl-[14px] pt-px leading-[18.500px] text-[#cbcdcd]">
        <div className="w-[153px]">Librería<br />Puente_de_Diodos</div>
        <div className="w-[148px]">Nombre de huella<br />KBPC5010</div>
        <div className="w-16">Pads<br />4</div>
        <div>Doc:<br />Palabras clave:</div>
      </div>

      {/* status bar */}
      <footer className="flex h-6 shrink-0 items-center bg-[#181b20] pl-[5px]">
        <Status className="w-[614px] tracking-[-0.4px]">La selección fue copiada</Status>
        <Status className="w-[89px] tracking-[-0.1px]">Z 4,98</Status>
        <Status className="w-[189px] tracking-[-0.03px]">X 16,4000  Y -12,9500</Status>
        <Status className="w-[299px] tracking-[-0.2px]">dx 16,4000  dy -12,9500  dist 20,8965</Status>
        <Status className="w-[217px] tracking-[-0.04px]">grid X 0,0500  Y 0,0500</Status>
        <Status className="w-[86px]">mm</Status>
        <Status className="w-[199px]">Seleccionar elemento(s)</Status>
        <Status className="w-[132px] tracking-[-0.2px]">Limitar a H, V, ...</Status>
        <svg width="19" height="19" viewBox="0 0 19 19" className="mt-1 shrink-0" stroke="#0a0b0d" strokeWidth="1.200">
          <path d="M0 19L19 0M6.500 19L19 6.500M13 19L19 13" />
        </svg>
      </footer>
    </div>
  );
}
